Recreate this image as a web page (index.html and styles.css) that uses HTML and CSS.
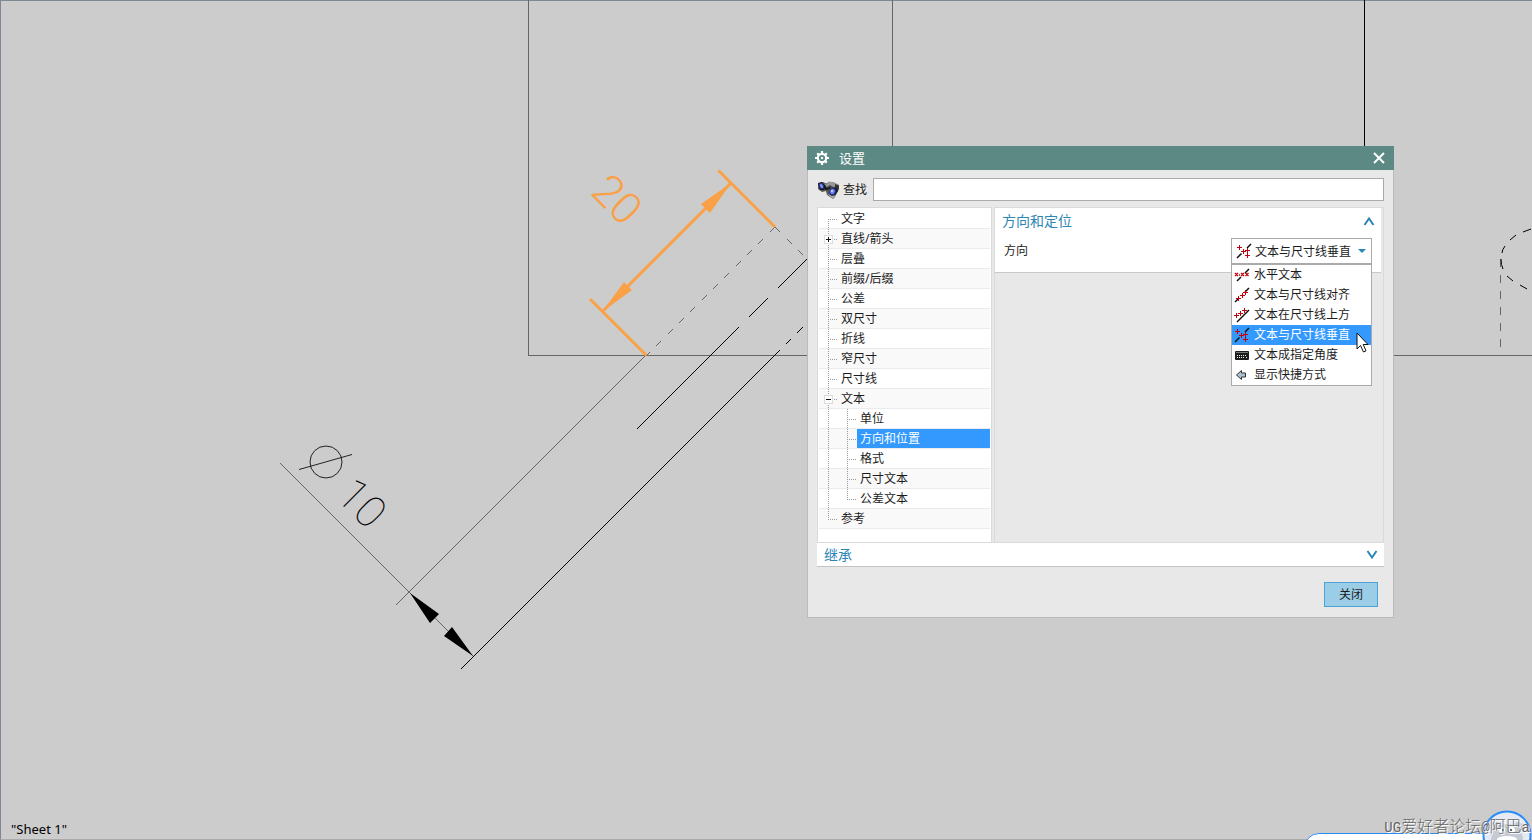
FILE: index.html
```
<!DOCTYPE html>
<html lang="zh-CN">
<head>
<meta charset="utf-8">
<title>设置</title>
<link rel="stylesheet" href="styles.css">
</head>
<body>
<svg class="defs" width="0" height="0" aria-hidden="true">
  <defs>
    <symbol id="plus" viewBox="0 0 5 5"><path d="M2.5 0v5M0 2.5h5" stroke="#c0000c" fill="none"/></symbol>
    <symbol id="i-horizontal" viewBox="0 0 16 16">
      <path d="M3 14l4-4M11 6l4-4" stroke="#111" stroke-width="1.5"/>
      <path d="M1 6l3 3M4 6l-3 3M7 6l3 3M10 6l-3 3M11.500 6l3 3M14.500 6l-3 3M5 8h1" stroke="#c0000c" stroke-width="1.3"/>
    </symbol>
    <symbol id="i-aligned" viewBox="0 0 16 16">
      <path d="M1 15l4-4M11 5l4-4" stroke="#111" stroke-width="1.500"/>
      <use href="#plus" x="2" y="9" width="5" height="5"/><use href="#plus" x="6" y="6" width="5" height="5"/><use href="#plus" x="9" y="3" width="5" height="5"/>
    </symbol>
    <symbol id="i-above" viewBox="0 0 16 16">
      <path d="M3 15L15 3" stroke="#111" stroke-width="1.500"/>
      <use href="#plus" x="0" y="6" width="5" height="5"/><use href="#plus" x="4" y="4" width="5" height="5"/><use href="#plus" x="8" y="1" width="5" height="5"/>
    </symbol>
    <symbol id="i-perp" viewBox="0 0 16 16">
      <path d="M1 15l4.500-4.500M11 5l4-4" stroke="#111" stroke-width="1.500"/>
      <use href="#plus" x="1" y="2" width="5" height="5"/><use href="#plus" x="5" y="6" width="5" height="5"/><use href="#plus" x="9" y="5" width="5" height="5"/><use href="#plus" x="9" y="10" width="5" height="5"/>
    </symbol>
    <symbol id="i-keyboard" viewBox="0 0 16 16">
      <rect x="1" y="4" width="14" height="9" rx="1" fill="#1c1c1c"/>
      <path d="M2 5.500h12" stroke="#777"/>
      <path d="M3 8.500h10M3 10.500h1M5 10.500h6M12 10.500h1" stroke="#eee" stroke-dasharray="1 1"/>
    </symbol>
    <symbol id="i-arrow" viewBox="0 0 16 16">
      <path d="M2.500 8L7.500 3.500v2.500h4v4h-4v2.500z" fill="#a9c3d6" stroke="#333"/>
    </symbol>
  </defs>
</svg>

<main class="sheet">
  <svg class="drawing" width="100%" height="100%" role="img" aria-label="Sheet 1">
    <g class="edge edge-soft">
      <line x1="528.5" y1="0" x2="528.5" y2="355"/>
      <line x1="892.5" y1="0" x2="892.5" y2="355"/>
      <line x1="528" y1="355.5" x2="101%" y2="355.5"/>
      <path d="M645.500 355.500L395.500 605.500M280.500 463.500L473.500 656.500"/>
      <path stroke-dasharray="7 9" d="M774.500 227.500L646.500 355.500M775.500 227.500L807 259"/>
      <path stroke-dasharray="8 8" d="M1500.500 259V355"/>
    </g>
    <g class="edge">
      <line x1="1364.500" y1="0" x2="1364.500" y2="355"/>
      <path d="M807.500 258.500L777.500 288.500M767.500 298.500L748.500 317.500M738.500 327.500L636.500 429.500"/>
      <path d="M802.500 327.500L796.500 333.500M790.500 339.500L785.500 344.500M779.500 350.500L460.500 669.500"/>
    </g>
    <path class="edge-smooth" d="M1531 229L1523 232M1516 235L1510 240M1505 246Q1502 250 1502 253M1501 259Q1501 265 1503 269M1507 276L1513 281M1520 285L1527 289"/>
    <path d="M410 593L439 614 430 623ZM473 656L452 627 444 636Z"/>
    <g class="diameter">
      <circle cx="326" cy="462" r="16"/>
      <path d="M299 469.500L352 454.500"/>
    </g>
    <text class="dim" x="334" y="497" transform="rotate(45 334 497)">10</text>
    <g class="picked">
      <path d="M718.500 170.500L775 227M590 299L646.500 355.500M603 311L731 183"/>
      <path class="head" d="M731 183L701 204 710 213ZM602 312L624 282 632 290Z"/>
    </g>
    <text class="dim dim-picked" x="589" y="193" transform="rotate(45 589 193)">20</text>
  </svg>
  <p class="sheet-name">"Sheet 1"</p>
</main>

<section class="dialog" role="dialog" aria-labelledby="dlg-title">
  <header class="titlebar">
    <svg width="16" height="16" viewBox="0 0 16 16" aria-hidden="true">
      <path d="M8 1v14M1 8h14M3.200 3.200l9.600 9.600M12.800 3.200l-9.600 9.600" stroke="#fff" stroke-width="2.200"/>
      <circle cx="8" cy="8" r="4.200" fill="#5c8983" stroke="#fff" stroke-width="2.200"/><circle cx="8" cy="8" r="1.200" fill="#fff"/>
    </svg>
    <h1 id="dlg-title">设置</h1>
    <button class="close-x" type="button" aria-label="关闭窗口">
      <svg width="12" height="12" viewBox="0 0 12 12"><path d="M1 1l10 10M11 1L1 11" stroke="#fff" stroke-width="2"/></svg>
    </button>
  </header>
  <div class="content">
    <div class="search">
      <svg width="24" height="20" viewBox="0 0 24 20" aria-hidden="true">
        <path d="M1 3.500L6 2l3 1.500 3-1.500 4 0 6 3v4l-4 8-2 2-6-4-1-4-4 1-4-3z" fill="#555"/>
        <path d="M4 2.500l5 2 3-3 4 .5 5 3-3 3-5-3-4 2z" fill="#999"/>
        <path d="M8 7l3 1 3-2-1 3-5 1zM1 3l4-1 4 4-2 4-4 0z" fill="#151515"/>
        <path d="M14 8l5-1 2 4-4 5-4-1z" fill="#181818"/><path d="M18 4l4 2-1 5-3-4z" fill="#333"/>
        <path d="M9 13l6 3 4-1-3 4z" fill="#aaa"/>
        <ellipse cx="4.500" cy="6" rx="1.800" ry="2.800" transform="rotate(-25 4.500 6)" fill="#8198f0" stroke="#25308a"/>
        <ellipse cx="15.500" cy="11.500" rx="2.700" ry="3.200" transform="rotate(20 15.500 11.500)" fill="#6d84ee" stroke="#25308a"/>
        <circle cx="15" cy="11" r="1" fill="#d7defd"/>
      </svg>
      <label for="find">查找</label>
      <input id="find" type="text">
    </div>
    <div class="panes">
      <nav class="tree" aria-label="设置类别">
        <ul>
          <li><div class="row first"><span class="rail"></span><span class="name">文字</span></div></li>
          <li><div class="row"><span class="rail"><button class="toggle" type="button" aria-label="展开"><svg width="7" height="7" viewBox="0 0 7 7"><path d="M1 3.500h5M3.500 1v5" stroke="#111"/></svg></button></span><span class="name">直线/箭头</span></div></li>
          <li><div class="row"><span class="rail"></span><span class="name">层叠</span></div></li>
          <li><div class="row"><span class="rail"></span><span class="name">前缀/后缀</span></div></li>
          <li><div class="row"><span class="rail"></span><span class="name">公差</span></div></li>
          <li><div class="row"><span class="rail"></span><span class="name">双尺寸</span></div></li>
          <li><div class="row"><span class="rail"></span><span class="name">折线</span></div></li>
          <li><div class="row"><span class="rail"></span><span class="name">窄尺寸</span></div></li>
          <li><div class="row"><span class="rail"></span><span class="name">尺寸线</span></div></li>
          <li><div class="row"><span class="rail"><button class="toggle" type="button" aria-label="折叠"><svg width="7" height="7" viewBox="0 0 7 7"><path d="M1 3.500h5" stroke="#111"/></svg></button></span><span class="name">文本</span></div>
            <ul>
              <li><div class="row"><span class="rail sub"></span><span class="name">单位</span></div></li>
              <li><div class="row"><span class="rail sub"></span><span class="name current">方向和位置</span></div></li>
              <li><div class="row"><span class="rail sub"></span><span class="name">格式</span></div></li>
              <li><div class="row"><span class="rail sub"></span><span class="name">尺寸文本</span></div></li>
              <li><div class="row"><span class="rail sub end"></span><span class="name">公差文本</span></div></li>
            </ul>
          </li>
          <li><div class="row shade last"><span class="rail"></span><span class="name">参考</span></div></li>
        </ul>
      </nav>
      <div class="detail">
        <div class="group">
          <h2>方向和定位
            <button class="chev" type="button" aria-label="收起"><svg width="12" height="9" viewBox="0 0 12 9"><path d="M1.500 8L6 1.500 10.500 8" fill="none" stroke="#2b86b5" stroke-width="2"/></svg></button>
          </h2>
          <div class="field">
            <label for="orient">方向</label>
            <div class="combo">
              <svg class="combo-icon" width="16" height="16" aria-hidden="true"><use href="#i-perp"/></svg>
              <select id="orient"><option>文本与尺寸线垂直</option></select>
              <svg class="combo-arrow" width="8" height="4" viewBox="0 0 8 4" aria-hidden="true"><path d="M0 0h8L4 4z" fill="#2b86b5"/></svg>
              <ul class="menu" role="listbox" aria-label="方向选项">
                <li role="option"><svg width="16" height="16"><use href="#i-horizontal"/></svg>水平文本</li>
                <li role="option"><svg width="16" height="16"><use href="#i-aligned"/></svg>文本与尺寸线对齐</li>
                <li role="option"><svg width="16" height="16"><use href="#i-above"/></svg>文本在尺寸线上方</li>
                <li role="option" aria-selected="true" class="active"><svg width="16" height="16"><use href="#i-perp"/></svg>文本与尺寸线垂直</li>
                <li role="option"><svg width="16" height="16"><use href="#i-keyboard"/></svg>文本成指定角度</li>
                <li role="option"><svg width="16" height="16"><use href="#i-arrow"/></svg>显示快捷方式</li>
              </ul>
            </div>
          </div>
        </div>
      </div>
    </div>
    <h2 class="inherit">继承
      <button class="chev" type="button" aria-label="展开继承"><svg width="12" height="9" viewBox="0 0 12 9"><path d="M1.500 1L6 7.500 10.500 1" fill="none" stroke="#2b86b5" stroke-width="2"/></svg></button>
    </h2>
    <footer><button class="close" type="button">关闭</button></footer>
  </div>
</section>

<svg class="cursor" width="14" height="22" viewBox="0 0 14 22" aria-hidden="true"><path d="M1 1v16l3.500-3.500 3 6.500 2.500-1.200-2.800-6.300H12z" fill="#fff" stroke="#111"/></svg>

<div class="assistant" aria-hidden="true">
  <div class="bubble"></div>
  <svg class="face" width="52" height="30" viewBox="0 0 52 30">
    <circle cx="26" cy="25" r="23.500" fill="#e6eaf3" stroke="#2b8cf7" stroke-width="2"/>
    <path d="M10 30a16 16 0 0 1 32 0z" fill="#c5cad4"/><circle cx="15" cy="17" r="5" fill="#c5cad4"/><circle cx="37" cy="17" r="5" fill="#c5cad4"/>
    <circle cx="21" cy="20" r="3" fill="#fff"/><circle cx="31" cy="20" r="3" fill="#fff"/><circle cx="22" cy="20" r="1" fill="#333"/><circle cx="30" cy="20" r="1" fill="#333"/>
    <ellipse cx="26" cy="29" rx="10" ry="3" fill="#fff"/>
  </svg>
</div>
<p class="watermark"><span>UG</span>爱好者论坛<span>@</span>阿巴<span>a</span></p>
</body>
</html>
```
FILE: styles.css
```
* { box-sizing: border-box; }
body {
  margin: 0;
  background: #ccc;
  color: #1c1c1c;
  font: 12px/20px "Noto Sans", "Noto Sans CJK SC", sans-serif;
  overflow: hidden;
}
ul { list-style: none; margin: 0; padding: 0; }
h1, h2, p { margin: 0; font-weight: 400; }
button, input, select { font: inherit; color: inherit; }
.defs { position: absolute; }

.sheet {
  position: relative;
  height: 100vh;
  border: solid #7d8894;
  border-width: 1px 0 0 1px;
  border-bottom: 1px solid #aaa;
}
.drawing { position: absolute; top: -1px; left: -1px; overflow: visible; }
.edge, .edge-soft, .edge-smooth, .diameter { fill: none; stroke: #000; stroke-width: 1px; }
.edge { shape-rendering: crispEdges; }
.edge-soft { stroke: #666; }
.diameter { stroke: #222; }
.picked { fill: none; stroke: #faa046; stroke-width: 3px; }
.picked .head { fill: #faa046; stroke: none; }
.dim { font: 100 44px Roboto, sans-serif; fill: #000; }
.dim-picked { font-weight: 300; fill: #faa046; }
.sheet-name {
  position: absolute;
  left: 10px;
  bottom: 0;
  color: #000;
  font-size: 13px;
}

.dialog {
  position: absolute;
  left: 807px;
  top: 146px;
  width: 587px;
  background: #e8e8e8;
  border: 1px solid #bbb;
  border-top: 0;
}
.titlebar {
  display: flex;
  align-items: center;
  gap: 9px;
  height: 24px;
  margin: 0 -1px;
  padding: 0 9px 0 7px;
  background: #5c8983;
  color: #fff;
}
.titlebar h1 { flex: 1; font-size: 13px; line-height: 24px; }
.close-x, .chev, .toggle { display: flex; padding: 0; border: 0; background: none; }
.content { padding: 8px 9px 10px; }
.search { display: flex; align-items: center; gap: 2px; }
.search input {
  flex: 1;
  height: 23px;
  margin-left: 4px;
  padding: 0 4px;
  border: 1px solid #aaa;
  background: #fff;
}
.panes {
  display: flex;
  gap: 2px;
  height: 335px;
  margin-top: 6px;
}
.tree {
  width: 175px;
  padding: 1px 1px 0;
  background: #fff;
  border: 1px solid #dadada;
  border-bottom: 0;
}
.row {
  display: flex;
  height: 20px;
  border-bottom: 1px solid #ebebeb;
  line-height: 19px;
}
.tree > ul > li:nth-child(even) > .row, .row.shade, .tree ul ul li:nth-child(even) .row { background: #f9f9f9; }
.name { flex: 1; padding-left: 3px; }
.name.current { background: #39f; color: #fff; }
.rail {
  width: 19px;
  margin-bottom: -1px;
  padding: 6px 0 0 5px;
  background:
    repeating-linear-gradient(to bottom, #999 0 1px, transparent 1px 2px) 9px 0 / 1px 20px no-repeat,
    repeating-linear-gradient(to right, #999 0 1px, transparent 1px 2px) 9px 10px / 9px 1px no-repeat;
}
.first .rail { background-position: 9px 10px; }
.last .rail { background-size: 1px 10px, 9px 1px; }
.rail.sub {
  width: 38px;
  background:
    repeating-linear-gradient(to bottom, #999 0 1px, transparent 1px 2px) 9px 0 / 1px 20px no-repeat,
    repeating-linear-gradient(to bottom, #999 0 1px, transparent 1px 2px) 28px 0 / 1px 20px no-repeat,
    repeating-linear-gradient(to right, #999 0 1px, transparent 1px 2px) 28px 10px / 9px 1px no-repeat;
}
.rail.sub.end { background-size: 1px 20px, 1px 10px, 9px 1px; }
.toggle {
  width: 9px;
  height: 9px;
  border: 1px solid #ddd;
  background: #fff;
}
.detail {
  flex: 1;
  padding-right: 2px;
  border: 1px solid #dadada;
  border-bottom: 0;
}
.group { background: #fff; border-bottom: 1px solid #c8c8c8; }
.group h2, .inherit {
  display: flex;
  align-items: center;
  justify-content: space-between;
  padding: 0 6px 0 7px;
  color: #2b86b5;
  font-size: 14px;
  line-height: 26px;
}
.field {
  display: flex;
  align-items: flex-start;
  justify-content: space-between;
  height: 38px;
  padding: 4px 9px 0;
  line-height: 26px;
}
.combo { position: relative; width: 141px; }
.combo select {
  appearance: none;
  display: block;
  width: 100%;
  height: 26px;
  padding: 0 0 0 23px;
  border: 1px solid #aaa;
  border-radius: 0;
  background: #fff;
}
.combo-icon { position: absolute; left: 5px; top: 5px; }
.combo-arrow { position: absolute; right: 6px; top: 11px; }
.menu {
  position: absolute;
  top: 26px;
  left: 0;
  width: 100%;
  background: #fff;
  border: 1px solid #aaa;
  line-height: 20px;
}
.menu li {
  display: flex;
  align-items: center;
  gap: 4px;
  padding-left: 2px;
  white-space: nowrap;
}
.menu .active { background: #39f; color: #fff; }
.inherit {
  background: #fff;
  border: solid #dadada;
  border-width: 1px 0;
  border-bottom-color: #c4c4c4;
  line-height: 23px;
}
footer { display: flex; justify-content: flex-end; padding: 15px 6px 0; }
.close {
  width: 54px;
  height: 25px;
  padding: 0;
  border: 1px solid #4ca3d8;
  background: #9bcde6;
}
.cursor { position: absolute; left: 1356px; top: 332px; }

.assistant {
  position: absolute;
  right: 0;
  bottom: 0;
  width: 228px;
  height: 30px;
  overflow: hidden;
}
.bubble {
  height: 30px;
  margin-top: 23px;
  background: #fff;
  border: 1px solid #2b8cf7;
  border-radius: 16px;
}
.face { position: absolute; right: -1px; top: 0; }
.watermark {
  position: absolute;
  right: 2px;
  bottom: 1px;
  color: #666;
  font: 300 16px/22px "Noto Sans CJK SC", sans-serif;
  text-shadow: 1px 1px 0 #fff;
}
.watermark span { font-family: "Liberation Mono", monospace; font-size: 14px; }
```
